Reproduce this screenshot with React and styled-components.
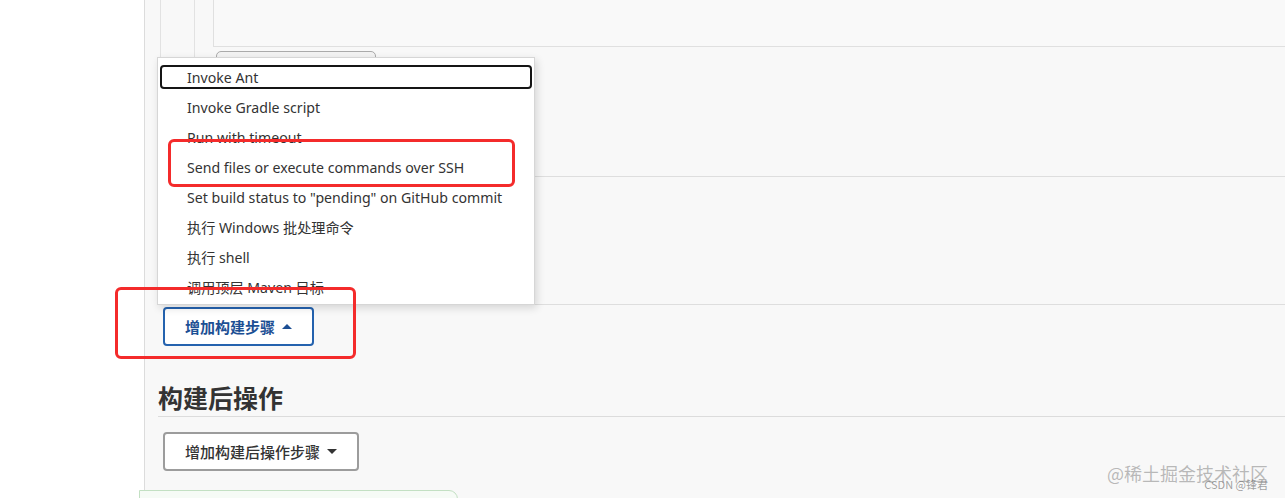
// Imports
import React from "react";
import styled, { createGlobalStyle } from "styled-components";

// Data
const buildSteps = [
	"Invoke Ant",
	"Invoke Gradle script",
	"Run with timeout",
	"Send files or execute commands over SSH",
	"Set build status to \"pending\" on GitHub commit",
	"执行 Windows 批处理命令",
	"执行 shell",
	"调用顶层 Maven 目标",
];

// Component
const App = () => {

	// Return
	return(
		<Page>
			<GlobalStyle />
			<Sidebar />
			<Main>
				<Content>
					<StepBlock $height={ 176 }>
						<Nest $pad={ 33 } $offset={ 2 }>
							<Nest $pad={ 18 }>
								<Editor />
								<GhostButton />
							</Nest>
						</Nest>
					</StepBlock>
					<StepBlock $height={ 127 } />
					<AddButton $primary>
						增加构建步骤
						<Caret $up />
					</AddButton>
					<SectionTitle>构建后操作</SectionTitle>
					<AddButton $top={ 15 }>
						增加构建后操作步骤
						<Caret />
					</AddButton>
				</Content>
				<Menu>
					{ buildSteps.map((step, i) => (
						<MenuItem key={ step }>
							<MenuLabel $focused={ i === 0 }>{ step }</MenuLabel>
						</MenuItem>
					)) }
				</Menu>
			</Main>
			<Highlight $x={ 168 } $y={ 139 } $w={ 347 } $h={ 48 } />
			<Highlight $x={ 115 } $y={ 287 } $w={ 241 } $h={ 72 } />
			<Toast />
			<Watermark>
				<span className="site">@稀土掘金技术社区</span>
				<span className="author">CSDN @锋君</span>
			</Watermark>
		</Page>
	);

};

// Styled
const GlobalStyle = createGlobalStyle`
	html, body{
		margin: 0;
		padding: 0;
		background: #ffffff;
	}
	body{
		font-family: "Noto Sans", "Noto Sans CJK SC", sans-serif;
		color: #333333;
	}
`;

const Page = styled.div`
	position: relative;
	display: flex;
	width: 1285px;
	height: 498px;
	overflow: hidden;
`;

const Sidebar = styled.aside`
	flex: 0 0 144px;
	background: #ffffff;
`;

const Main = styled.main`
	position: relative;
	flex: 1;
	background: #f8f8f8;
	border-left: 1px solid #dcdcdc;
`;

const Content = styled.div`
	display: flex;
	flex-direction: column;
	align-items: flex-start;
	padding-left: 13px;
`;

const StepBlock = styled.div`
	align-self: stretch;
	height: ${ (p) => p.$height }px;
	border-bottom: 1px solid #dedede;
	overflow: hidden;
`;

const Nest = styled.div`
	height: 100%;
	margin-left: ${ (p) => p.$offset || 0 }px;
	padding-left: ${ (p) => p.$pad }px;
	border-left: 1px solid #e2e2e2;
`;

const Editor = styled.div`
	height: 46px;
	background: #f9f9f9;
	border-left: 1px solid #e0e0e0;
	border-bottom: 1px solid #e0e0e0;
`;

const GhostButton = styled.div`
	width: 158px;
	height: 34px;
	margin: 4px 0 0 3px;
	border: 1px solid #aaaaaa;
	border-radius: 5px;
	background: #f3f3f3;
`;

const AddButton = styled.button`
	display: inline-flex;
	align-items: center;
	height: 39px;
	margin: ${ (p) => p.$top || 2 }px 0 0 5px;
	padding: 0 20px;
	font-family: "Noto Sans", "Noto Sans CJK SC", sans-serif;
	font-size: 15px;
	font-weight: ${ (p) => p.$primary ? 700 : 500 };
	color: ${ (p) => p.$primary ? "#1c4f94" : "#333333" };
	background: #ffffff;
	border: 2px solid ${ (p) => p.$primary ? "#2462ae" : "#9c9c9c" };
	border-radius: 4px;
	cursor: pointer;
`;

const Caret = styled.span`
	width: 0;
	height: 0;
	margin-left: 7px;
	border-left: 5px solid transparent;
	border-right: 5px solid transparent;
	${ (p) => p.$up
		? "border-bottom: 5px solid currentColor;"
		: "border-top: 5px solid currentColor;" }
`;

const SectionTitle = styled.h2`
	align-self: stretch;
	margin: 30px 0 0 0;
	padding: 6px 0 2px 0;
	font-size: 25px;
	line-height: 32px;
	font-weight: 700;
	color: #333333;
	border-bottom: 1px solid #dcdcdc;
`;

const Menu = styled.ul`
	position: absolute;
	top: 57px;
	left: 12px;
	width: 372px;
	margin: 0;
	padding: 4px 2px 2px 2px;
	list-style: none;
	background: #ffffff;
	border: 1px solid #d6d6d6;
	box-shadow: 2px 3px 8px rgba(0, 0, 0, 0.14);
`;

const MenuItem = styled.li`
	height: 30px;
	padding: 3px 0;
	box-sizing: border-box;
`;

const MenuLabel = styled.div`
	display: flex;
	align-items: center;
	height: 24px;
	box-sizing: border-box;
	padding-left: 25px;
	font-size: 14.15px;
	color: #333333;
	white-space: nowrap;
	border: 2px solid ${ (p) => p.$focused ? "#151515" : "transparent" };
	border-radius: 4px;
`;

const Highlight = styled.div`
	position: absolute;
	left: ${ (p) => p.$x }px;
	top: ${ (p) => p.$y }px;
	width: ${ (p) => p.$w }px;
	height: ${ (p) => p.$h }px;
	box-sizing: border-box;
	border: 3px solid #f42b2b;
	border-radius: 6px;
	pointer-events: none;
`;

const Toast = styled.div`
	position: absolute;
	left: 139px;
	top: 490px;
	width: 319px;
	height: 20px;
	box-sizing: border-box;
	background: #f6fbf6;
	border: 1px solid #c3e0c3;
	border-radius: 0 9px 0 0;
`;

const Watermark = styled.div`
	position: absolute;
	right: 17px;
	bottom: 7px;
	display: flex;
	flex-direction: column;
	align-items: flex-end;
	font-family: "Noto Sans CJK SC", sans-serif;
	pointer-events: none;
	.site{
		font-size: 18px;
		line-height: 20px;
		color: rgba(120, 120, 120, 0.5);
	}
	.author{
		margin-top: -5px;
		font-size: 11px;
		line-height: 13px;
		color: rgba(110, 110, 110, 0.65);
	}
`;

// Export
export default App;
